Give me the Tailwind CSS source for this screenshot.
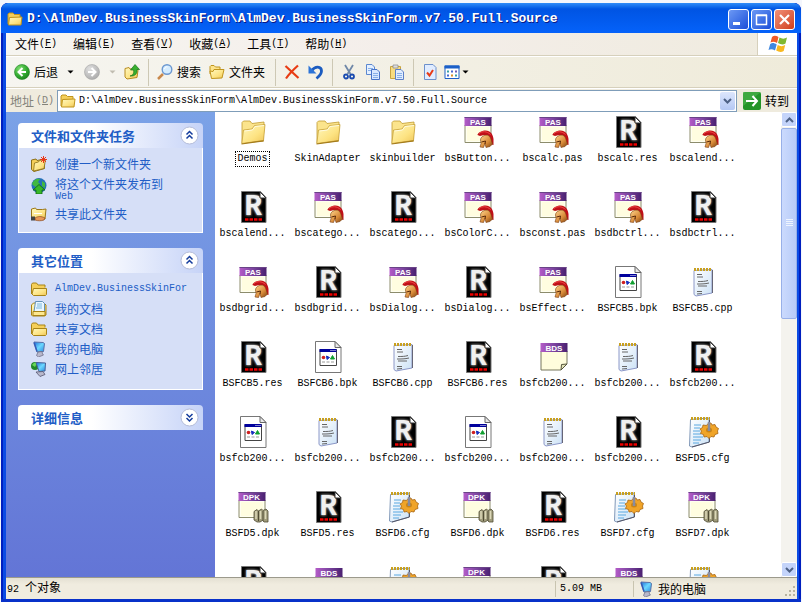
<!DOCTYPE html>
<html lang="zh-CN">
<head>
<meta charset="utf-8">
<title>D:\AlmDev.BusinessSkinForm\AlmDev.BusinessSkinForm.v7.50.Full.Source</title>
<script src="https://cdn.jsdelivr.net/npm/@tailwindcss/browser@4"></script>
</head>
<body class="h-screen overflow-hidden bg-[#f4f6fc] pt-[3px] pr-px pl-px font-['Noto_Sans_CJK_SC',sans-serif] text-[12px] leading-4 text-black">

<svg class="absolute size-0" aria-hidden="true">
  <defs>
    <linearGradient id="gFold" x1="0" y1="0" x2="1" y2="1"><stop offset="0" stop-color="#fff8c0"/><stop offset=".6" stop-color="#fde382"/><stop offset="1" stop-color="#eec458"/></linearGradient>
    <linearGradient id="gPurple" x1="0" y1="0" x2="1" y2="0"><stop offset="0" stop-color="#b45cc8"/><stop offset=".5" stop-color="#7c44a0"/><stop offset="1" stop-color="#4a2070"/></linearGradient>
    <radialGradient id="gGreen" cx=".35" cy=".3" r=".8"><stop offset="0" stop-color="#7fe070"/><stop offset=".6" stop-color="#30a830"/><stop offset="1" stop-color="#1b7c1c"/></radialGradient>
    <radialGradient id="gGray" cx=".35" cy=".3" r=".8"><stop offset="0" stop-color="#e0e0e0"/><stop offset="1" stop-color="#a8a8a8"/></radialGradient>
    <linearGradient id="gBrass" x1="0" y1="0" x2="1" y2="1"><stop offset="0" stop-color="#ffd890"/><stop offset=".6" stop-color="#d88a38"/><stop offset="1" stop-color="#7a4010"/></linearGradient>
    <linearGradient id="gPaper" x1="0" y1="0" x2="1" y2="1"><stop offset="0" stop-color="#ffffff"/><stop offset="1" stop-color="#cce2f6"/></linearGradient>
    <linearGradient id="gScreen" x1="0" y1="0" x2="1" y2="1"><stop offset="0" stop-color="#1c6cd8"/><stop offset=".5" stop-color="#6cd8ff"/><stop offset="1" stop-color="#2a88e0"/></linearGradient>
    <filter id="soft"><feGaussianBlur stdDeviation=".9"/></filter>
  </defs>

  <symbol id="folder" viewBox="0 0 32 32">
    <path d="M5 27V6.500L6.500 5H13l2 2.500 12-1.500v4L26 25z" fill="#fbe48c" stroke="#c09a30" stroke-width=".8"/>
    <path d="M4.800 27.500 6.500 14 15 13l2.500-3.500L28 8.500 26.500 24.500z" fill="url(#gFold)" stroke="#c8a238" stroke-width=".8"/>
    <path d="m7.500 15 8-1 2.500-3.500 9-1" fill="none" stroke="#fffbe0"/>
    <path d="m4.500 28 22.300-3.200" stroke="#a47c1c" stroke-width="1.200"/>
  </symbol>
  <symbol id="res" viewBox="0 0 32 32">
    <path d="M4.500.5h19l5.500 6v25h-24.500z" fill="#000" stroke="#777"/>
    <text x="7.500" y="23.500" font-family="Liberation Mono" font-weight="700" font-size="29" fill="#bbb" stroke="#999" stroke-width="1" filter="url(#soft)">R</text>
    <text x="7.500" y="23.500" font-family="Liberation Mono" font-weight="700" font-size="29" fill="#f0f0f0">R</text>
    <path d="M23 1v6h6z" fill="#fff" stroke="#333"/>
    <path d="M8 28.500h17" stroke="#e00" stroke-width="2.500" stroke-dasharray="3.500 1"/>
  </symbol>
  <symbol id="pasbase" viewBox="0 0 32 32">
    <path d="M3 9h26v17.500H3z" fill="#fffff0" stroke="#8c8c6c"/>
    <path d="M5 11h22v14H5z" fill="#fffde0"/>
    <path d="M2.500 1h27v9h-27z" fill="url(#gPurple)"/>
    <path d="M2.500 1.500h27" stroke="#6a4488"/>
  </symbol>
  <symbol id="pas" viewBox="0 0 32 32">
    <use href="#pasbase"/>
    <text x="16" y="8.500" text-anchor="middle" font-family="Liberation Sans" font-weight="700" font-size="8" fill="#fff">PAS</text>
    <path d="M15.500 19c0-2 4-4.500 8-4.500 5 0 7.500 4 8 8.500v6l-3.500-1-2-7-4-2-4 1z" fill="#c01018"/>
    <path d="M17 17.500c3-2.500 8-2.500 11.500 1" stroke="#f04848" fill="none"/>
    <path d="M18.500 24c0-4 7-7 9.500-3 1 2 1.500 4 2.500 7l-2.500 2.500-4 1-1-4-1.500 4-3.500-.5 1-3.500z" fill="url(#gBrass)" stroke="#7a3c10" stroke-width=".6"/>
    <path d="m19.500 26 4-1-.5 3" stroke="#5a2808" fill="none"/>
  </symbol>
  <symbol id="bds" viewBox="0 0 32 32">
    <path d="M4 10h26v13l-6 6H4z" fill="#fffddc" stroke="#77775c"/>
    <path d="M3.500 2h27v9h-27z" fill="url(#gPurple)"/>
    <path d="m24 29 .5-5.500 5.500-.5z" fill="#e4e4b8" stroke="#55553c"/>
    <text x="17" y="9.500" text-anchor="middle" font-family="Liberation Sans" font-weight="700" font-size="8" fill="#fff">BDS</text>
  </symbol>
  <symbol id="dpk" viewBox="0 0 32 32">
    <g transform="translate(-1 0)"><use href="#pasbase"/></g>
    <text x="14.500" y="8.500" text-anchor="middle" font-family="Liberation Sans" font-weight="700" font-size="8" fill="#fff">DPK</text>
    <path d="M17 20.500l3-2 1.500 1.500 3-2 1.500 1.500 3-1.500 2 2V31h-4l-1.500-1.500L23 31h-3l-3-2z" fill="#a09c7c" stroke="#504c34" stroke-width=".8"/>
    <path d="M19 20v8M23.500 20v8M28.500 20v8" stroke="#dcd8b8" stroke-width="1.500"/>
    <path d="M21.500 20v10M26 20v10" stroke="#504c34"/>
  </symbol>
  <symbol id="bpk" viewBox="0 0 32 32">
    <path d="M3.500.5h19.500l6 6v25H3.500z" fill="#fff" stroke="#777"/>
    <path d="M23 .5v6h6z" fill="#e8e8e8" stroke="#666"/>
    <path d="M8 8.500h16.500V24.500H8z" fill="#fff" stroke="#444"/>
    <path d="M7.500 8h17v3h-17z" fill="#00009c"/>
    <path d="M18.500 9.500h5" stroke="#fff" stroke-dasharray="1 1"/>
    <circle cx="11.500" cy="16.500" r="1.800" fill="#d02020"/><path d="M14.500 15l3 1.500-2.500 2z" fill="#1830c0" stroke="#1830c0"/><path d="m20.500 14.500 2 3.500h-4z" fill="#10a030" stroke="#10a030"/>
    <path d="M10 21h3M14.500 21h3M19 21h3" stroke="#999"/>
  </symbol>
  <symbol id="cpp" viewBox="0 0 32 32">
    <path d="M7 4.500 25 3.500V27L9 30l-2-1.500z" fill="url(#gPaper)" stroke="#8c98c8"/>
    <path d="M25.500 4v23" stroke="#667"/>
    <path d="M7 3.500h18" stroke="#c8a020" stroke-width="3" stroke-dasharray="2 1"/>
    <path d="M10 8.500h5M10 11h6M11 15.500c4 0 7 0 10-1M10 18c4 0 8 0 12-1M11 20h9M10 25.500h5M10 28l5-.5" stroke="#666" fill="none"/>
  </symbol>
  <symbol id="cfg" viewBox="0 0 32 32">
    <path d="M3.500 3.500 22 2v24L5 31l-2.500-1z" fill="url(#gPaper)" stroke="#8098b8"/>
    <path d="M22.500 3v23L5 31" fill="none" stroke="#556"/>
    <path d="M4 2.500h19" stroke="#c8a020" stroke-width="3" stroke-dasharray="2 1"/>
    <path d="M7 9h7M7 12h6M6 15h7M6 18h8M6 21h10M6 24h8M6 27h6" stroke="#5aa8e0"/>
    <path d="M21 7.500l3-.5 1 2 3-.5 1 2.500 2.500 1.500-1 2.500.5 2.500-3 1-1 2.500-3-.5-2 2-2-2-3 .5-.5-2.500-3-1 1-2.500-1.500-2 2.500-1.500.5-2.500 3.500.5z" fill="#f0a428" stroke="#a86410" stroke-width=".8"/>
    <ellipse cx="22" cy="14" rx="3" ry="2.500" fill="#c88418"/>
    <path d="M22 6v9" stroke="#888ca0" stroke-width="2.500"/>
  </symbol>

  <symbol id="sfolder" viewBox="0 0 16 16">
    <path d="M.5 13V3.500l1-1.500h4l1.500 2h7v2.500" fill="#f5cf5a" stroke="#a88418"/>
    <path d="M2.500 7.500h13v6l-1 1h-12l-1.500-1.500z" fill="url(#gFold)" stroke="#a88418"/>
  </symbol>
  <symbol id="tfolder" viewBox="0 0 16 16">
    <path d="M1 13V3L2 2h4l1.500 1.500h5.500v2.500" fill="#f5cf5a" stroke="#c0941c"/>
    <path d="M1.500 14 2.500 6.500l12.500-.5-1 8z" fill="url(#gFold)" stroke="#c0941c"/>
  </symbol>
  <symbol id="newfolder" viewBox="0 0 16 16">
    <path d="M.5 13.500V4l4.500-1 1 1.500 7-1.500.5 9.500L3 15.500z" fill="#f5cf5a" stroke="#8c7018"/>
    <path d="m2.500 15 1-8 4-1 1-1.500 6-1-1.500 9z" fill="url(#gFold)" stroke="#8c7018" stroke-width=".8"/>
    <path d="M12.500 0v7M9 3.500h7M10 1l5 5M15 1l-5 5" stroke="#e83818"/>
  </symbol>
  <symbol id="globe" viewBox="0 0 16 16">
    <circle cx="8" cy="7.500" r="7.500" fill="#2470b8"/>
    <path d="M1 6c1-4 5-6 8-5L7 4l2 2-4 3-2-1zM11 3l3 2v5l-3-2z" fill="#40b840"/>
    <path d="m8 6.500 6 5.500h-3v4H5v-4H2z" fill="#38b828" stroke="#0c6810" stroke-width=".8"/>
  </symbol>
  <symbol id="share" viewBox="0 0 16 16">
    <path d="M.5 12V3l4-1 1 1.500h6L15 3l-1 10H2z" fill="url(#gFold)" stroke="#9c7818"/>
    <path d="M3 7.500h8" stroke="#fff"/>
    <path d="M4 12c3-2 6-2 10 0l-1 2c-3 1-6 1-9 0z" fill="#e89858" stroke="#8c4818" stroke-width=".7"/>
    <path d="M0 10.500h4v4H0z" fill="#444"/>
  </symbol>
  <symbol id="docs" viewBox="0 0 16 16">
    <path d="M.5 14V4l2-2H13l2 2v10l-1.500 1h-12z" fill="url(#gFold)" stroke="#a88418"/>
    <path d="M4.500.5h7l2 2v8H3z" fill="#eaf6ff" stroke="#6090b8"/>
    <path d="M6 3h5M6 5h5M5 7h6" stroke="#78b8e0"/>
    <path d="M2 10.500h12v4H2z" fill="#fde890" stroke="#a88418"/>
  </symbol>
  <symbol id="pc" viewBox="0 0 16 16">
    <path d="m3 1 9 .5 1.500 1-1 8-6.500.5z" fill="url(#gScreen)" stroke="#5870a8"/>
    <path d="m3 1.500 3 9" stroke="#345cb8" stroke-width="1.500"/>
    <path d="m7 11 4-.5.5 2.500 1 1-5 2-2-1.500z" fill="#b8b8cc" stroke="#666680" stroke-width=".7"/>
  </symbol>
  <symbol id="net" viewBox="0 0 16 16">
    <circle cx="4" cy="5" r="4" fill="#208828"/><path d="M1 4c2-3 4-3 5-2L4 6z" fill="#68d858"/>
    <path d="m5 1.500 9.500.5-.5 8-6 .5z" fill="url(#gScreen)" stroke="#486098"/>
    <path d="m5 11 7-.5 2 3-5 2z" fill="#b8b8cc" stroke="#555570" stroke-width=".8"/>
  </symbol>
</svg>

<div class="flex h-full flex-col overflow-hidden rounded-t-[7px] bg-[#0b4be4] shadow-[inset_2px_0_0_#001fbe,inset_-2px_0_0_#001fbe]">
  <!-- title bar -->
  <header class="flex h-[30px] shrink-0 items-center rounded-t-[7px] bg-linear-to-b from-[#2f8cf8] via-[#0054e3] via-20% to-[#0562fa] pl-1.5 pr-1.5 pt-0.5">
    <svg class="size-4 shrink-0"><use href="#tfolder"/></svg>
    <h1 class="ml-1 min-w-0 flex-1 overflow-hidden whitespace-nowrap font-['Liberation_Mono',monospace] text-[13px] font-bold text-white [text-shadow:1px_1px_0_#0a1883]">D:\AlmDev.BusinessSkinForm\AlmDev.BusinessSkinForm.v7.50.Full.Source</h1>
    <div class="flex gap-0.5">
      <button aria-label="最小化" class="size-[21px] rounded-[3px] border border-white bg-linear-to-br from-[#6c98f4] to-[#1c4cd8]"><svg viewBox="0 0 19 19"><path d="M4 13.500h7" stroke="#fff" stroke-width="3"/></svg></button>
      <button aria-label="最大化" class="size-[21px] rounded-[3px] border border-white bg-linear-to-br from-[#6c98f4] to-[#1c4cd8]"><svg viewBox="0 0 19 19"><path d="M4.500 5.500h10v9h-10zM4 5h11" fill="none" stroke="#fff" stroke-width="1.500"/></svg></button>
      <button aria-label="关闭" class="size-[21px] rounded-[3px] border border-white bg-linear-to-br from-[#f09078] to-[#d03c14]"><svg viewBox="0 0 19 19"><path d="m5 5 9 9M14 5l-9 9" stroke="#fff" stroke-width="2.200"/></svg></button>
    </div>
  </header>

  <div class="mr-1 ml-[5px] flex min-h-0 flex-1 flex-col bg-[#efebde]">
    <!-- menu bar -->
    <nav class="flex h-[23px] shrink-0 border-b border-[#d6d0bc] bg-linear-to-r from-[#f6f5f0] via-[#f4eeea] to-[#efebde]">
      <div class="flex flex-1 items-center gap-4 pl-[9px]">
        <button class="flex items-center">文件<span class="font-['Liberation_Mono',monospace] text-[10px]">(<u>F</u>)</span></button>
        <button class="flex items-center">编辑<span class="font-['Liberation_Mono',monospace] text-[10px]">(<u>E</u>)</span></button>
        <button class="flex items-center">查看<span class="font-['Liberation_Mono',monospace] text-[10px]">(<u>V</u>)</span></button>
        <button class="flex items-center">收藏<span class="font-['Liberation_Mono',monospace] text-[10px]">(<u>A</u>)</span></button>
        <button class="flex items-center">工具<span class="font-['Liberation_Mono',monospace] text-[10px]">(<u>T</u>)</span></button>
        <button class="flex items-center">帮助<span class="font-['Liberation_Mono',monospace] text-[10px]">(<u>H</u>)</span></button>
      </div>
      <div class="flex w-10 items-center justify-center border-l border-[#d6d0bc] bg-white">
        <svg class="h-[18px] w-5" viewBox="0 0 20 18"><path d="M4 2c2-2 4-1.500 6.500 0L9 8C6.500 6.500 4.500 6.500 2.500 7.500z" fill="#f05a28"/><path d="M11.500 2.500c2.500 1.500 5 1.500 7.500 0L17.500 8.500c-2.500 1.500-5 1-7.500-.5z" fill="#80b830"/><path d="M2.200 9c2-1.500 4-1 6.500.5L7 15.500C4.500 14 2.500 14 .5 15z" fill="#4088e0"/><path d="M9.700 10c2.500 1.500 5 1.500 7.500 0l-1.500 6c-2.500 1.500-5 1-7.500-.5z" fill="#f8b820"/></svg>
      </div>
    </nav>

    <!-- standard buttons -->
    <div class="flex h-8 shrink-0 items-center border-t border-b border-t-white border-b-[#d6d0bc] bg-linear-to-r from-[#f6f5f0] to-[#efebda] pl-2">
      <button class="flex items-center gap-1"><svg class="size-4" viewBox="0 0 16 16"><circle cx="8" cy="8" r="7.500" fill="url(#gGreen)" stroke="#1c8420" stroke-width=".6"/><path d="M8.500 4 4.500 8l4 4M4.500 8H12" fill="none" stroke="#fff" stroke-width="2"/></svg>后退</button>
      <button aria-label="后退列表" class="ml-1.5 w-3"><svg class="mx-auto h-1 w-[7px]" viewBox="0 0 7 4"><path d="M.5.500h6l-3 3z"/></svg></button>
      <button aria-label="前进" class="ml-2"><svg class="size-4" viewBox="0 0 16 16"><circle cx="8" cy="8" r="7.500" fill="url(#gGray)" stroke="#a4a4a4" stroke-width=".6"/><path d="m7.500 4 4 4-4 4M11.500 8H4" fill="none" stroke="#fff" stroke-width="2"/></svg></button>
      <button aria-label="前进列表" class="ml-1.5 w-3"><svg class="mx-auto h-1 w-[7px]" viewBox="0 0 7 4"><path d="M.5.500h6l-3 3z" fill="#c0bcb0"/></svg></button>
      <button aria-label="向上" class="ml-1.5"><svg class="size-4" viewBox="0 0 16 16"><path d="M1 13V4.500l4-1 1 1.500 6-.5 2 2-1 7L3 15z" fill="url(#gFold)" stroke="#b88c20"/><path d="M6 12c4-1 4-4 3.500-6H6.500L11 .5l4.500 5H13c.5 4-2 7-7 6.500z" fill="#38b030" stroke="#187418" stroke-width=".7"/></svg></button>
      <span class="mx-2 h-[27px] w-px bg-[#cdc8b4]"></span>
      <button class="flex items-center gap-1"><svg class="size-4" viewBox="0 0 16 16"><path d="m6 10-5 5" stroke="#c8884c" stroke-width="2.500"/><circle cx="10" cy="5.500" r="4.800" fill="#d4ecff" stroke="#6c98d0" stroke-width="1.400"/><path d="M7.500 5c.5-2 2-2.500 3-2" stroke="#fff" fill="none"/></svg>搜索</button>
      <button class="ml-2 flex items-center gap-1"><svg class="size-4" viewBox="0 0 16 16"><path d="M1 10V2.500L2 1.500h3l1.500 1.500H11v3" fill="#fde48c" stroke="#c0941c"/><path d="M2.500 14.500 1 7l3 .5 1-2h10L13 14z" fill="url(#gFold)" stroke="#c0941c"/></svg>文件夹</button>
      <span class="mx-2 ml-2.5 h-[27px] w-px bg-[#cdc8b4]"></span>
      <button aria-label="删除"><svg class="size-4" viewBox="0 0 16 16"><path d="m1.500 2 13 12M14 1.500C9 6 5 10 2 14.500" stroke="#e83c14" stroke-width="2.200" fill="none"/></svg></button>
      <button aria-label="撤消" class="ml-2"><svg class="size-4" viewBox="0 0 16 16"><path d="M3.500 7C7 1.500 13.500 2 13.500 7c0 3-2 5-5 7.500" fill="none" stroke="#1c5cc0" stroke-width="2.800"/><path d="M.5 1.500v8h8z" fill="#2c74d8"/></svg></button>
      <span class="mx-2 h-[27px] w-px bg-[#cdc8b4]"></span>
      <button aria-label="剪切"><svg class="size-4" viewBox="0 0 16 16"><path d="m4 1 5.500 9M12 1 6.500 10" stroke="#7088a8" stroke-width="1.800"/><circle cx="5" cy="12.500" r="2" fill="none" stroke="#1c4cb0" stroke-width="1.800"/><circle cx="11" cy="12.500" r="2" fill="none" stroke="#1c4cb0" stroke-width="1.800"/></svg></button>
      <button aria-label="复制" class="ml-2"><svg class="size-4" viewBox="0 0 16 16"><path d="M1.500.5H7L9.500 3v7.500h-8z" fill="#e4f0ff" stroke="#5c88d0"/><path d="M3 4.500h5M3 6.500h3" stroke="#88b0e8"/><path d="M6.500 5.500H12l2.500 2.500v7.500h-8z" fill="#d8e8ff" stroke="#4874c8"/><path d="M8 9.500h5M8 11.500h5M8 13.500h5" stroke="#88b0e8"/></svg></button>
      <button aria-label="粘贴" class="ml-2"><svg class="size-4" viewBox="0 0 16 16"><path d="M1.500 2.500h10v12h-10z" fill="#f8dc80" stroke="#c8a440"/><path d="M4 1h5v3H4z" fill="#ddd" stroke="#888" stroke-width=".7"/><path d="M6.500 5.500H12l2.500 2.500v7.500h-8z" fill="#e0ecff" stroke="#5c80c8"/><path d="M8 9.500h5M8 11.500h5M8 13.500h5" stroke="#88b0e8"/></svg></button>
      <span class="mx-2 h-[27px] w-px bg-[#cdc8b4]"></span>
      <button aria-label="属性"><svg class="size-4" viewBox="0 0 16 16"><path d="M2.500.5H11l3 3v12H2.500z" fill="#e0ecff" stroke="#6c90cc"/><path d="m5 8.500 2.500 3L11 6" fill="none" stroke="#e83c18" stroke-width="2"/></svg></button>
      <button aria-label="查看方式" class="ml-1.5 flex items-center gap-0.5"><svg class="size-4" viewBox="0 0 16 16"><path d="M1 2h14v12.500H1z" fill="#fff" stroke="#1c60c8"/><path d="M.5 1.500h15v3H.5z" fill="#1c60c8"/><path d="M3 6.500h2v2H3zM11 10.500h2v2h-2z" fill="#38a0a8"/><path d="M7 6.500h2v2H7zM3 10.500h2v2H3z" fill="#4868d0"/><path d="M11 6.500h2v2h-2z" fill="#705cb0"/><path d="M7 10.500h2v2H7z" fill="#d89028"/></svg><svg class="h-1 w-[7px]" viewBox="0 0 7 4"><path d="M.5.500h6l-3 3z"/></svg></button>
    </div>

    <!-- address bar -->
    <div class="flex h-6 shrink-0 items-center border-t border-white">
      <label for="addr" class="flex w-[51px] items-center pl-1 text-[#84837a]">地址<span class="ml-0.5 font-['Liberation_Mono',monospace] text-[10px]">(<u>D</u>)</span></label>
      <div class="flex h-[22px] min-w-0 flex-1 items-center border border-[#7f9db9] bg-white pl-0.5">
        <svg class="size-4 shrink-0"><use href="#tfolder"/></svg>
        <input id="addr" class="ml-[3px] min-w-0 flex-1 font-['Liberation_Mono',monospace] text-[10px] outline-none" value="D:\AlmDev.BusinessSkinForm\AlmDev.BusinessSkinForm.v7.50.Full.Source">
        <button aria-label="地址列表" class="mr-px flex h-[18px] w-[15px] items-center justify-center rounded-[2px] bg-linear-to-b from-[#dce6fc] to-[#b4c8f4]"><svg class="h-1.5 w-[9px]" viewBox="0 0 9 6"><path d="m1 1 3.500 3.500L8 1" fill="none" stroke="#4d6185" stroke-width="2"/></svg></button>
      </div>
      <button class="flex items-center gap-1 pr-2 pl-1.5"><svg class="size-[18px]" viewBox="0 0 18 18"><rect width="18" height="18" rx="2" fill="#249428"/><path d="M0 0h18L0 14z" fill="#50b850" opacity=".6"/><path d="M3 9h11M9.500 4 14 9l-4.500 5" fill="none" stroke="#fff" stroke-width="2"/></svg>转到</button>
    </div>

    <div class="flex min-h-0 flex-1">
      <!-- task pane -->
      <aside class="flex w-[209px] shrink-0 flex-col gap-[15px] overflow-hidden bg-linear-to-b from-[#7ba2e7] to-[#6375d6] px-3 pt-[11px] text-[#215dc6]">
        <section>
          <h2 class="flex h-[25px] items-center justify-between rounded-t-[4px] bg-linear-to-r from-white from-40% to-[#c6d3f7] pr-1 pl-[13px] text-[13px] font-bold">文件和文件夹任务
            <button aria-label="折叠" class="size-[19px]"><svg viewBox="0 0 19 19"><circle cx="9.500" cy="9.500" r="8.500" fill="#fff" stroke="#b4bcd8"/><path d="m6.500 8.500 3-3 3 3M6.500 12.500l3-3 3 3" fill="none" stroke="#143c9c" stroke-width="1.500"/></svg></button></h2>
          <ul class="space-y-1 border border-t-0 border-white bg-[#d6dff7] pt-2 pb-2.5 pl-3 pr-4">
            <li><a href="#" class="flex gap-2"><svg class="size-4 shrink-0"><use href="#newfolder"/></svg>创建一个新文件夹</a></li>
            <li><a href="#" class="flex gap-2"><svg class="mt-0.5 size-4 shrink-0"><use href="#globe"/></svg><span>将这个文件夹发布到<span class="block font-['Liberation_Mono',monospace] text-[10px] leading-[10px]">Web</span></span></a></li>
            <li><a href="#" class="flex gap-2"><svg class="size-4 shrink-0"><use href="#share"/></svg>共享此文件夹</a></li>
          </ul>
        </section>
        <section>
          <h2 class="flex h-[25px] items-center justify-between rounded-t-[4px] bg-linear-to-r from-white from-40% to-[#c6d3f7] pr-1 pl-[13px] text-[13px] font-bold">其它位置
            <button aria-label="折叠" class="size-[19px]"><svg viewBox="0 0 19 19"><circle cx="9.500" cy="9.500" r="8.500" fill="#fff" stroke="#b4bcd8"/><path d="m6.500 8.500 3-3 3 3M6.500 12.500l3-3 3 3" fill="none" stroke="#143c9c" stroke-width="1.500"/></svg></button></h2>
          <ul class="space-y-1 border border-t-0 border-white bg-[#d6dff7] pt-2 pb-3 pl-3 pr-3">
            <li><a href="#" class="flex gap-2"><svg class="size-4 shrink-0"><use href="#sfolder"/></svg><span class="whitespace-nowrap font-['Liberation_Mono',monospace] text-[10px]">AlmDev.BusinessSkinFor</span></a></li>
            <li><a href="#" class="flex gap-2"><svg class="size-4 shrink-0"><use href="#docs"/></svg>我的文档</a></li>
            <li><a href="#" class="flex gap-2"><svg class="size-4 shrink-0"><use href="#sfolder"/></svg>共享文档</a></li>
            <li><a href="#" class="flex gap-2"><svg class="size-4 shrink-0"><use href="#pc"/></svg>我的电脑</a></li>
            <li><a href="#" class="flex gap-2"><svg class="size-4 shrink-0"><use href="#net"/></svg>网上邻居</a></li>
          </ul>
        </section>
        <section>
          <h2 class="flex h-[25px] items-center justify-between rounded-t-[4px] bg-linear-to-r from-white from-40% to-[#c6d3f7] pr-1 pl-[13px] text-[13px] font-bold">详细信息
            <button aria-label="展开" class="size-[19px]"><svg viewBox="0 0 19 19"><circle cx="9.500" cy="9.500" r="8.500" fill="#fff" stroke="#b4bcd8"/><path d="m6.500 6 3 3 3-3M6.500 10l3 3 3-3" fill="none" stroke="#143c9c" stroke-width="1.500"/></svg></button></h2>
        </section>
      </aside>

      <!-- file list -->
      <main id="files" class="grid min-w-0 flex-1 grid-cols-[repeat(auto-fill,75px)] content-start gap-y-[27px] overflow-hidden bg-white pt-1"></main>

      <!-- scroll bar -->
      <div class="flex w-4 shrink-0 flex-col gap-px bg-[#f4f3ee]">
        <button aria-label="向上滚动" class="flex h-[15px] shrink-0 items-center justify-center rounded-[2px] border border-white bg-[#c4d4fa]"><svg class="h-1.5 w-[9px]" viewBox="0 0 9 6"><path d="m1 5 3.500-3.500L8 5" fill="none" stroke="#4d6185" stroke-width="2"/></svg></button>
        <div class="flex min-h-0 flex-1 flex-col">
          <div class="flex h-[44%] flex-col items-center justify-center rounded-[2px] border border-[#98b0e8] bg-linear-to-r from-[#cbdafd] to-[#b8ccf8]"><svg class="h-2 w-[7px]" viewBox="0 0 7 8"><path d="M0 .5h7M0 2.500h7M0 4.500h7M0 6.500h7" stroke="#eef4fe"/></svg></div>
        </div>
        <button aria-label="向下滚动" class="flex h-[15px] shrink-0 items-center justify-center rounded-[2px] border border-white bg-[#c4d4fa]"><svg class="h-1.5 w-[9px]" viewBox="0 0 9 6"><path d="m1 1 3.500 3.500L8 1" fill="none" stroke="#4d6185" stroke-width="2"/></svg></button>
      </div>
    </div>

    <!-- status bar -->
    <footer class="flex h-[22px] shrink-0 items-center border-t border-[#9c9a8c] bg-linear-to-b from-[#e4e0d2] to-[#f0ecdf] to-30%">
      <p class="flex-1 pl-px"><span class="font-['Liberation_Mono',monospace] text-[10px]">92 </span>个对象</p>
      <p class="h-4 w-[78px] border-l border-[#c8c4b0] pl-1 font-['Liberation_Mono',monospace] text-[10px]">5.09 MB</p>
      <p class="flex h-4 w-[150px] items-center gap-1 border-l border-[#c8c4b0] pl-1"><svg class="size-4"><use href="#pc"/></svg>我的电脑</p>
      <svg class="mt-1 size-3.5" viewBox="0 0 14 14"><path d="M10 2h2v2h-2zM6 6h2v2H6zM10 6h2v2h-2zM2 10h2v2H2zM6 10h2v2H6zM10 10h2v2h-2z" fill="#b8b4a0"/></svg>
    </footer>
  </div>
  <div class="h-[3px] shrink-0 bg-[#0831c9]"></div>
</div>

<script>
const files = [
  ['folder','Demos'],['folder','SkinAdapter'],['folder','skinbuilder'],['pas','bsButton...'],['pas','bscalc.pas'],['res','bscalc.res'],['pas','bscalend...'],
  ['res','bscalend...'],['pas','bscatego...'],['res','bscatego...'],['pas','bsColorC...'],['pas','bsconst.pas'],['pas','bsdbctrl...'],['res','bsdbctrl...'],
  ['pas','bsdbgrid...'],['res','bsdbgrid...'],['pas','bsDialog...'],['res','bsDialog...'],['pas','bsEffect...'],['bpk','BSFCB5.bpk'],['cpp','BSFCB5.cpp'],
  ['res','BSFCB5.res'],['bpk','BSFCB6.bpk'],['cpp','BSFCB6.cpp'],['res','BSFCB6.res'],['bds','bsfcb200...'],['cpp','bsfcb200...'],['res','bsfcb200...'],
  ['bpk','bsfcb200...'],['cpp','bsfcb200...'],['res','bsfcb200...'],['bpk','bsfcb200...'],['cpp','bsfcb200...'],['res','bsfcb200...'],['cfg','BSFD5.cfg'],
  ['dpk','BSFD5.dpk'],['res','BSFD5.res'],['cfg','BSFD6.cfg'],['dpk','BSFD6.dpk'],['res','BSFD6.res'],['cfg','BSFD7.cfg'],['dpk','BSFD7.dpk'],
  ['res',''],['bds',''],['cfg',''],['dpk',''],['res',''],['bds',''],['cfg','']
];
document.getElementById('files').innerHTML = files.map(([icon, name], i) => `
  <div class="flex h-12 flex-col items-center gap-1">
    <svg class="size-8 shrink-0"><use href="#${icon}"/></svg>
    <span class="${i === 0 ? 'px-px outline-1 outline-dotted outline-black' : ''} whitespace-nowrap font-['Liberation_Mono',monospace] text-[10px] leading-[14px]">${name}</span>
  </div>`).join('');
</script>
</body>
</html>
